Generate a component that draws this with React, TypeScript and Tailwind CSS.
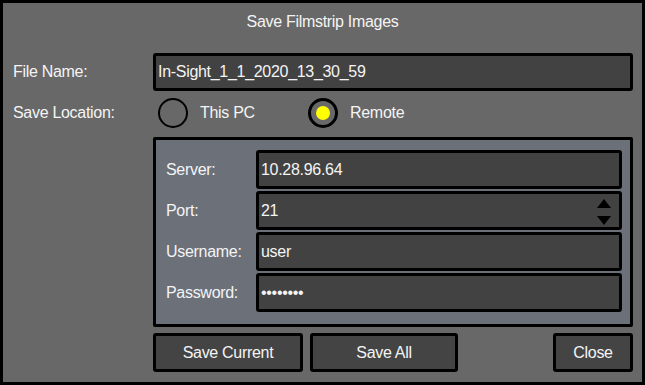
const FONT = { fontFamily: '"Liberation Sans", Arial, sans-serif' };

function Field({ value, spinner }: { value: string; spinner?: boolean }) {
  return (
    <div className="relative flex h-[39px] w-[366px] items-center rounded-[3px] border-[3px] border-black bg-[#424242] pl-[2px] text-[#f4f4f4]">
      {value}
      {spinner && (
        <div className="absolute top-[5px] right-[8px] flex flex-col gap-[8px]">
          <div className="h-0 w-0 border-x-[7px] border-b-[9px] border-x-transparent border-b-black" />
          <div className="h-0 w-0 border-x-[7px] border-t-[9px] border-x-transparent border-t-black" />
        </div>
      )}
    </div>
  );
}

function Radio({ label, checked }: { label: string; checked?: boolean }) {
  return (
    <div className="flex w-[150px] items-center gap-[12px]">
      <span
        className={`flex size-[30px] items-center justify-center rounded-full border-black ${
          checked ? "border-[3px]" : "border-2"
        }`}
      >
        {checked && <span className="size-[14px] rounded-full bg-[#ffff00]" />}
      </span>
      <span>{label}</span>
    </div>
  );
}

function Btn({ label, width }: { label: string; width: string }) {
  return (
    <button
      type="button"
      className={`flex h-[39px] items-center justify-center rounded-[3px] border-[3px] border-black bg-[#444444] text-[#f4f4f4] ${width}`}
    >
      {label}
    </button>
  );
}

const REMOTE = [
  { label: "Server:", value: "10.28.96.64" },
  { label: "Port:", value: "21", spinner: true },
  { label: "Username:", value: "user" },
  { label: "Password:", value: "••••••••" },
];

export default function App() {
  return (
    <div
      className="flex h-[385px] w-[645px] flex-col border-[3px] border-black bg-[#686868] text-[16px] tracking-[-0.3px] text-[#f4f4f4]"
      style={FONT}
    >
      <div className="flex h-[38px] items-center justify-center">Save Filmstrip Images</div>

      <div className="mt-[12px] flex h-[38px] items-center pl-[10px]">
        <span className="w-[140px]">File Name:</span>
        <div className="flex h-[38px] w-[480px] items-center rounded-[3px] border-[3px] border-black bg-[#424242] pl-[2px]">
          In-Sight_1_1_2020_13_30_59
        </div>
      </div>

      <div className="mt-[6px] flex h-[32px] items-center pl-[10px]">
        <span className="w-[145px]">Save Location:</span>
        <div className="flex items-center">
          <Radio label="This PC" />
          <Radio label="Remote" checked />
        </div>
      </div>

      <div className="mt-[8px] ml-[150px] flex h-[190px] w-[480px] flex-col gap-[2px] rounded-[2px] border-[3px] border-black bg-[#6b7079] pt-[10px] pl-[100px]">
        {REMOTE.map((r) => (
          <div key={r.label} className="relative flex items-center">
            <span className="absolute -left-[90px]">{r.label}</span>
            <Field value={r.value} spinner={r.spinner} />
          </div>
        ))}
      </div>

      <div className="mt-[6px] ml-[150px] flex w-[480px] gap-[7px]">
        <Btn label="Save Current" width="w-[150px]" />
        <Btn label="Save All" width="w-[148px]" />
        <div className="flex-1" />
        <Btn label="Close" width="w-[80px]" />
      </div>
    </div>
  );
}
